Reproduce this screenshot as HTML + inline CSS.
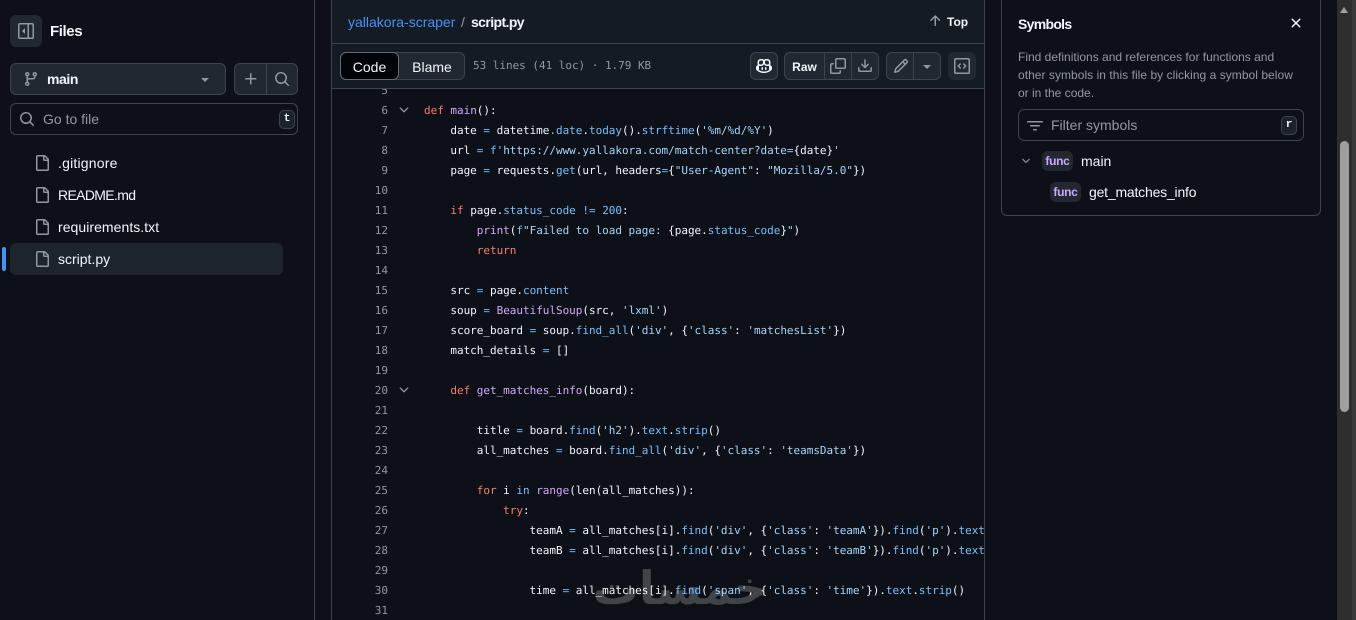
<!DOCTYPE html>
<html><head><meta charset="utf-8">
<style>
*{box-sizing:border-box}
html,body{margin:0;padding:0;width:1356px;height:620px;overflow:hidden;background:#0d1117}
body{position:relative;font-family:"Liberation Sans",sans-serif;font-size:14px;color:#f0f6fc}
.a{position:absolute;white-space:nowrap}
.t{position:absolute;white-space:nowrap;line-height:20px;height:20px}
.box{position:absolute;border:1px solid #3d444d;border-radius:6px}
.btn{background:#212830}
svg{position:absolute;fill:currentColor;display:block}
.g{color:#9198a1}
.kbd{position:absolute;width:16px;height:19px;background:#1c2229;border:1px solid #3d444d;border-radius:5px;font:bold 11px/17px "Liberation Mono",monospace;text-align:center;color:#f0f6fc}
.div{position:absolute;width:1px;background:#3d444d}
pre{position:absolute;margin:0;font:11px/20px "DejaVu Sans Mono",monospace;text-rendering:geometricPrecision;letter-spacing:-.025px;color:#f0f6fc}
.n{left:340px;width:48px;text-align:right;color:#9198a1;top:81px}
.c{left:424px;top:81px;width:560px;overflow:hidden;height:539px}
.k{color:#ff7b72}.f{color:#d2a8ff}.b{color:#79c0ff}.s{color:#a5d6ff}
.badge{position:absolute;width:31px;height:20px;background:#212830;border-radius:6px;color:#c9a8ff;font:bold 12px/20px "Liberation Sans",sans-serif;letter-spacing:-.3px;text-align:center}
</style></head><body>

<!-- sidebar -->
<div class="a" style="left:314px;top:0;width:1px;height:620px;background:#3d444d"></div>
<div class="a btn" style="left:10px;top:15px;width:32px;height:32px;border-radius:6px"></div>
<svg class="g" style="left:18px;top:23px" width="16" height="16" viewBox="0 0 16 16"><path d="M4.177 7.823 6.573 5.427A.25.25 0 0 1 7 5.604v4.792a.25.25 0 0 1-.427.177L4.177 8.177a.25.25 0 0 1 0-.354Z"/><path d="M1.75 0h12.5C15.216 0 16 .784 16 1.75v12.5A1.75 1.75 0 0 1 14.25 16H1.75A1.75 1.75 0 0 1 0 14.25V1.75C0 .784.784 0 1.75 0ZM1.5 1.75v12.5c0 .138.112.25.25.25H9.5v-13H1.75a.25.25 0 0 0-.25.25ZM11 14.5h3.25a.25.25 0 0 0 .25-.25V1.75a.25.25 0 0 0-.25-.25H11Z"/></svg>
<div class="t" style="left:50px;top:22px;font-weight:bold;font-size:15px;letter-spacing:-.4px">Files</div>

<div class="box btn" style="left:10px;top:63px;width:216px;height:32px"></div>
<svg class="g" style="left:23px;top:71px" width="16" height="16" viewBox="0 0 16 16"><path d="M9.5 3.25a2.25 2.25 0 1 1 3 2.122V6A2.5 2.5 0 0 1 10 8.5H6a1 1 0 0 0-1 1v1.128a2.251 2.251 0 1 1-1.5 0V5.372a2.25 2.25 0 1 1 1.5 0v1.836A2.493 2.493 0 0 1 6 7h4a1 1 0 0 0 1-1v-.628A2.25 2.25 0 0 1 9.5 3.25Zm-6 0a.75.75 0 1 0 1.5 0 .75.75 0 0 0-1.5 0Zm8.25-.75a.75.75 0 1 0 0 1.5.75.75 0 0 0 0-1.5ZM4.25 12a.75.75 0 1 0 0 1.5.75.75 0 0 0 0-1.5Z"/></svg>
<div class="t" style="left:47px;top:69px;font-weight:bold;letter-spacing:-.4px">main</div>
<div class="a" style="left:201px;top:78px;border-left:4px solid transparent;border-right:4px solid transparent;border-top:4px solid #9198a1"></div>

<div class="box btn" style="left:234px;top:63px;width:64px;height:32px"></div>
<div class="div" style="left:266px;top:64px;height:30px"></div>
<svg class="g" style="left:243px;top:71px" width="16" height="16" viewBox="0 0 16 16"><path d="M7.75 2a.75.75 0 0 1 .75.75V7h4.25a.75.75 0 0 1 0 1.5H8.5v4.25a.75.75 0 0 1-1.5 0V8.5H2.75a.75.75 0 0 1 0-1.5H7V2.75A.75.75 0 0 1 7.75 2Z"/></svg>
<svg class="g" style="left:274px;top:71px" width="16" height="16" viewBox="0 0 16 16"><path d="M10.68 11.74a6 6 0 0 1-7.922-8.982 6 6 0 0 1 8.982 7.922l3.04 3.04a.749.749 0 0 1-.326 1.275.749.749 0 0 1-.734-.215ZM11.5 7a4.499 4.499 0 1 0-8.997 0A4.499 4.499 0 0 0 11.5 7Z"/></svg>

<div class="box" style="left:10px;top:103px;width:288px;height:32px"></div>
<svg class="g" style="left:19px;top:111px" width="16" height="16" viewBox="0 0 16 16"><path d="M10.68 11.74a6 6 0 0 1-7.922-8.982 6 6 0 0 1 8.982 7.922l3.04 3.04a.749.749 0 0 1-.326 1.275.749.749 0 0 1-.734-.215ZM11.5 7a4.499 4.499 0 1 0-8.997 0A4.499 4.499 0 0 0 11.5 7Z"/></svg>
<div class="t g" style="left:43px;top:109px">Go to file</div>
<div class="kbd" style="left:279px;top:110px">t</div>

<div class="a" style="left:10px;top:243px;width:273px;height:32px;background:#1e242c;border-radius:6px"></div>
<div class="a" style="left:2px;top:247px;width:4px;height:24px;background:#4493f8;border-radius:2px"></div>
<svg class="g" style="left:34px;top:155px" width="16" height="16" viewBox="0 0 16 16"><path d="M2 1.75C2 .784 2.784 0 3.75 0h6.586c.464 0 .909.184 1.237.513l2.914 2.914c.329.328.513.773.513 1.237v9.586A1.75 1.75 0 0 1 13.25 16h-9.5A1.75 1.75 0 0 1 2 14.25Zm1.75-.25a.25.25 0 0 0-.25.25v12.5c0 .138.112.25.25.25h9.5a.25.25 0 0 0 .25-.25V6h-2.75A1.75 1.75 0 0 1 9 4.25V1.5Zm6.75.062V4.25c0 .138.112.25.25.25h2.688l-.011-.013-2.914-2.914-.013-.011Z"/></svg>
<svg class="g" style="left:34px;top:187px" width="16" height="16" viewBox="0 0 16 16"><path d="M2 1.75C2 .784 2.784 0 3.75 0h6.586c.464 0 .909.184 1.237.513l2.914 2.914c.329.328.513.773.513 1.237v9.586A1.75 1.75 0 0 1 13.25 16h-9.5A1.75 1.75 0 0 1 2 14.25Zm1.75-.25a.25.25 0 0 0-.25.25v12.5c0 .138.112.25.25.25h9.5a.25.25 0 0 0 .25-.25V6h-2.75A1.75 1.75 0 0 1 9 4.25V1.5Zm6.75.062V4.25c0 .138.112.25.25.25h2.688l-.011-.013-2.914-2.914-.013-.011Z"/></svg>
<svg class="g" style="left:34px;top:219px" width="16" height="16" viewBox="0 0 16 16"><path d="M2 1.75C2 .784 2.784 0 3.75 0h6.586c.464 0 .909.184 1.237.513l2.914 2.914c.329.328.513.773.513 1.237v9.586A1.75 1.75 0 0 1 13.25 16h-9.5A1.75 1.75 0 0 1 2 14.25Zm1.75-.25a.25.25 0 0 0-.25.25v12.5c0 .138.112.25.25.25h9.5a.25.25 0 0 0 .25-.25V6h-2.75A1.75 1.75 0 0 1 9 4.25V1.5Zm6.75.062V4.25c0 .138.112.25.25.25h2.688l-.011-.013-2.914-2.914-.013-.011Z"/></svg>
<svg class="g" style="left:34px;top:251px" width="16" height="16" viewBox="0 0 16 16"><path d="M2 1.75C2 .784 2.784 0 3.75 0h6.586c.464 0 .909.184 1.237.513l2.914 2.914c.329.328.513.773.513 1.237v9.586A1.75 1.75 0 0 1 13.25 16h-9.5A1.75 1.75 0 0 1 2 14.25Zm1.75-.25a.25.25 0 0 0-.25.25v12.5c0 .138.112.25.25.25h9.5a.25.25 0 0 0 .25-.25V6h-2.75A1.75 1.75 0 0 1 9 4.25V1.5Zm6.75.062V4.25c0 .138.112.25.25.25h2.688l-.011-.013-2.914-2.914-.013-.011Z"/></svg>
<div class="t" style="left:58px;top:153px;letter-spacing:.2px">.gitignore</div>
<div class="t" style="left:58px;top:185px;letter-spacing:-.65px">README.md</div>
<div class="t" style="left:58px;top:217px;letter-spacing:.05px">requirements.txt</div>
<div class="t" style="left:58px;top:249px">script.py</div>

<!-- watermark -->
<div class="a" dir="rtl" style="left:606px;top:558px;width:161px;height:60px;text-align:center;font:bold 46px/60px 'DejaVu Sans',sans-serif;color:#404347">خمسات</div>

<!-- code -->
<pre class="n">5
6
7
8
9
10
11
12
13
14
15
16
17
18
19
20
21
22
23
24
25
26
27
28
29
30
31</pre>
<pre class="c">

<span class="k">def</span> <span class="f">main</span>():
    date <span class="b">=</span> datetime<span class="b">.date</span>.<span class="b">today</span>().<span class="b">strftime</span>(<span class="s">'%m/%d/%Y'</span>)
    url <span class="b">=</span> <span class="b">f</span><span class="s">'https://www.yallakora.com/match-center?date=</span>{date}<span class="s">'</span>
    page <span class="b">=</span> requests.<span class="b">get</span>(url, headers<span class="b">=</span>{<span class="s">"User-Agent"</span>: <span class="s">"Mozilla/5.0"</span>})

    <span class="k">if</span> page.<span class="b">status_code</span> <span class="b">!=</span> <span class="b">200</span>:
        <span class="f">print</span>(<span class="b">f</span><span class="s">"Failed to load page: </span>{page.<span class="b">status_code</span>}<span class="s">"</span>)
        <span class="k">return</span>

    src <span class="b">=</span> page.<span class="b">content</span>
    soup <span class="b">=</span> <span class="f">BeautifulSoup</span>(src, <span class="s">'lxml'</span>)
    score_board <span class="b">=</span> soup.<span class="b">find_all</span>(<span class="s">'div'</span>, {<span class="s">'class'</span>: <span class="s">'matchesList'</span>})
    match_details <span class="b">=</span> []

    <span class="k">def</span> <span class="f">get_matches_info</span>(board):

        title <span class="b">=</span> board.<span class="b">find</span>(<span class="s">'h2'</span>).<span class="b">text</span>.<span class="b">strip</span>()
        all_matches <span class="b">=</span> board.<span class="b">find_all</span>(<span class="s">'div'</span>, {<span class="s">'class'</span>: <span class="s">'teamsData'</span>})

        <span class="k">for</span> i <span class="b">in</span> <span class="f">range</span>(len(all_matches)):
            <span class="k">try</span>:
                teamA <span class="b">=</span> all_matches[i].<span class="b">find</span>(<span class="s">'div'</span>, {<span class="s">'class'</span>: <span class="s">'teamA'</span>}).<span class="b">find</span>(<span class="s">'p'</span>).<span class="b">text</span>
                teamB <span class="b">=</span> all_matches[i].<span class="b">find</span>(<span class="s">'div'</span>, {<span class="s">'class'</span>: <span class="s">'teamB'</span>}).<span class="b">find</span>(<span class="s">'p'</span>).<span class="b">text</span>

                time <span class="b">=</span> all_matches[i].<span class="b">find</span>(<span class="s">'span'</span>, {<span class="s">'class'</span>: <span class="s">'time'</span>}).<span class="b">text</span>.<span class="b">strip</span>()
</pre>
<svg class="g" style="left:397px;top:103px" width="14" height="14" viewBox="0 0 16 16"><path d="M12.78 5.22a.749.749 0 0 1 0 1.06l-4.25 4.25a.749.749 0 0 1-1.06 0L3.22 6.28a.749.749 0 1 1 1.06-1.06L8 8.939l3.72-3.719a.749.749 0 0 1 1.06 0Z"/></svg>
<svg class="g" style="left:397px;top:383px" width="14" height="14" viewBox="0 0 16 16"><path d="M12.78 5.22a.749.749 0 0 1 0 1.06l-4.25 4.25a.749.749 0 0 1-1.06 0L3.22 6.28a.749.749 0 1 1 1.06-1.06L8 8.939l3.72-3.719a.749.749 0 0 1 1.06 0Z"/></svg>

<!-- main header -->
<div class="a" style="left:332px;top:0;width:652px;height:88px;background:#151b23"></div>
<div class="a" style="left:331px;top:0;width:1px;height:620px;background:#3d444d"></div>
<div class="a" style="left:984px;top:0;width:1px;height:620px;background:#3d444d"></div>
<div class="a" style="left:332px;top:43px;width:652px;height:1px;background:#3d444d"></div>
<div class="a" style="left:332px;top:88px;width:652px;height:1px;background:#3d444d"></div>

<div class="t" style="left:348px;top:12px;color:#4493f8">yallakora-scraper</div>
<div class="t g" style="left:461px;top:12px">/</div>
<div class="t" style="left:471px;top:12px;font-weight:bold;letter-spacing:-.6px">script.py</div>
<svg class="g" style="left:927px;top:13px" width="16" height="16" viewBox="0 0 16 16"><path d="M3.47 7.78a.75.75 0 0 1 0-1.06l4.25-4.25a.75.75 0 0 1 1.06 0l4.25 4.25a.751.751 0 0 1-.018 1.042.751.751 0 0 1-1.042.018L9 4.81v7.44a.75.75 0 0 1-1.5 0V4.81L4.53 7.78a.75.75 0 0 1-1.06 0Z"/></svg>
<div class="t" style="left:947px;top:12px;font-size:12px;font-weight:bold">Top</div>

<div class="box btn" style="left:340px;top:52px;width:125px;height:28px"></div>
<div class="box" style="left:340px;top:52px;width:59px;height:28px;background:#010409;border-color:#656c76"></div>
<div class="t" style="left:340px;top:57px;width:59px;text-align:center">Code</div>
<div class="t" style="left:399px;top:57px;width:66px;text-align:center">Blame</div>
<pre style="left:473px;top:56px;color:#9198a1">53 lines (41 loc) · 1.79 KB</pre>

<div class="box btn" style="left:750px;top:52px;width:28px;height:28px"></div>
<svg style="left:756px;top:58px;color:#f0f6fc" width="16" height="16" viewBox="0 0 16 16"><path d="M7.998 15.035c-4.562 0-7.873-2.914-7.998-3.749V9.338c.085-.628.677-1.686 1.588-2.065.013-.07.024-.143.036-.218.029-.183.06-.384.126-.612-.201-.508-.254-1.084-.254-1.656 0-.87.128-1.769.693-2.484.579-.733 1.494-1.124 2.724-1.261 1.206-.134 2.262.034 2.944.765.05.053.096.108.139.165.044-.057.094-.112.143-.165.682-.731 1.738-.899 2.944-.765 1.23.137 2.145.528 2.724 1.261.566.715.693 1.614.693 2.484 0 .572-.053 1.148-.254 1.656.066.228.098.429.126.612.012.076.024.148.037.218.924.385 1.522 1.471 1.591 2.095v1.872c0 .766-3.351 3.795-8.002 3.795Zm0-1.485c2.28 0 4.584-1.11 5.002-1.433V7.862l-.023-.116c-.49.21-1.075.291-1.727.291-1.146 0-2.059-.327-2.71-.991A3.222 3.222 0 0 1 8 6.303a3.24 3.24 0 0 1-.544.743c-.65.664-1.563.991-2.71.991-.652 0-1.236-.081-1.727-.291l-.023.116v4.255c.419.323 2.722 1.433 5.002 1.433ZM6.762 2.83c-.193-.206-.637-.413-1.682-.297-1.019.113-1.479.404-1.713.7-.247.312-.369.789-.369 1.554 0 .793.129 1.171.308 1.371.162.181.519.379 1.442.379.853 0 1.339-.235 1.638-.54.315-.322.527-.827.617-1.553.117-.935-.037-1.395-.241-1.614Zm4.155-.297c-1.044-.116-1.488.091-1.681.297-.204.219-.359.679-.242 1.614.091.726.303 1.231.618 1.553.299.305.784.54 1.638.54.922 0 1.28-.198 1.442-.379.179-.2.308-.578.308-1.371 0-.765-.123-1.242-.37-1.554-.233-.296-.693-.587-1.713-.7Z"/><path d="M6.25 9.037a.75.75 0 0 1 .75.75v1.501a.75.75 0 0 1-1.5 0V9.787a.75.75 0 0 1 .75-.75Zm4.25.75v1.501a.75.75 0 0 1-1.5 0V9.787a.75.75 0 0 1 1.5 0Z"/></svg>

<div class="box btn" style="left:784px;top:52px;width:95px;height:28px"></div>
<div class="div" style="left:824px;top:53px;height:26px"></div>
<div class="div" style="left:851px;top:53px;height:26px"></div>
<div class="t" style="left:785px;top:57px;width:39px;text-align:center;font-size:12px;font-weight:bold">Raw</div>
<svg class="g" style="left:830px;top:58px" width="16" height="16" viewBox="0 0 16 16"><path d="M0 6.75C0 5.784.784 5 1.75 5h1.5a.75.75 0 0 1 0 1.5h-1.5a.25.25 0 0 0-.25.25v7.5c0 .138.112.25.25.25h7.5a.25.25 0 0 0 .25-.25v-1.5a.75.75 0 0 1 1.5 0v1.5A1.75 1.75 0 0 1 9.25 16h-7.5A1.75 1.75 0 0 1 0 14.25Z"/><path d="M5 1.75C5 .784 5.784 0 6.75 0h7.5C15.216 0 16 .784 16 1.75v7.5A1.75 1.75 0 0 1 14.25 11h-7.5A1.75 1.75 0 0 1 5 9.25Zm1.75-.25a.25.25 0 0 0-.25.25v7.5c0 .138.112.25.25.25h7.5a.25.25 0 0 0 .25-.25v-7.5a.25.25 0 0 0-.25-.25Z"/></svg>
<svg class="g" style="left:857px;top:58px" width="16" height="16" viewBox="0 0 16 16"><path d="M2.75 14A1.75 1.75 0 0 1 1 12.25v-2.5a.75.75 0 0 1 1.5 0v2.5c0 .138.112.25.25.25h10.5a.25.25 0 0 0 .25-.25v-2.5a.75.75 0 0 1 1.5 0v2.5A1.75 1.75 0 0 1 13.25 14Z"/><path d="M7.25 7.689V2a.75.75 0 0 1 1.5 0v5.689l1.97-1.969a.749.749 0 1 1 1.06 1.06l-3.25 3.25a.749.749 0 0 1-1.06 0L4.22 6.78a.749.749 0 1 1 1.06-1.06l1.97 1.969Z"/></svg>

<div class="box btn" style="left:886px;top:52px;width:55px;height:28px"></div>
<div class="div" style="left:913px;top:53px;height:26px"></div>
<svg class="g" style="left:893px;top:58px" width="16" height="16" viewBox="0 0 16 16"><path d="M11.013 1.427a1.75 1.75 0 0 1 2.474 0l1.086 1.086a1.75 1.75 0 0 1 0 2.474l-8.61 8.61c-.21.21-.47.364-.756.445l-3.251.93a.75.75 0 0 1-.927-.928l.929-3.25c.081-.286.235-.547.445-.758l8.61-8.61Zm.176 4.823L9.75 4.81l-6.286 6.287a.253.253 0 0 0-.064.108l-.558 1.953 1.953-.558a.253.253 0 0 0 .108-.064Zm1.238-3.763a.25.25 0 0 0-.354 0L10.811 3.75l1.439 1.44 1.263-1.263a.25.25 0 0 0 0-.354Z"/></svg>
<div class="a" style="left:923px;top:65px;border-left:4px solid transparent;border-right:4px solid transparent;border-top:4px solid #9198a1"></div>

<div class="a btn" style="left:948px;top:52px;width:28px;height:28px;border-radius:6px"></div>
<svg class="g" style="left:954px;top:58px" width="16" height="16" viewBox="0 0 16 16"><path d="M0 1.75C0 .784.784 0 1.75 0h12.5C15.216 0 16 .784 16 1.75v12.5A1.75 1.75 0 0 1 14.25 16H1.75A1.75 1.75 0 0 1 0 14.25Zm1.75-.25a.25.25 0 0 0-.25.25v12.5c0 .138.112.25.25.25h12.5a.25.25 0 0 0 .25-.25V1.75a.25.25 0 0 0-.25-.25Zm7.47 3.97a.75.75 0 0 1 1.06 0l2 2a.75.75 0 0 1 0 1.06l-2 2a.749.749 0 0 1-1.275-.326.749.749 0 0 1 .215-.734L10.69 8 9.22 6.53a.75.75 0 0 1 0-1.06ZM6.78 6.53 5.31 8l1.47 1.47a.749.749 0 0 1-.326 1.275.749.749 0 0 1-.734-.215l-2-2a.75.75 0 0 1 0-1.06l2-2a.751.751 0 0 1 1.042.018.751.751 0 0 1 .018 1.042Z"/></svg>

<!-- symbols -->
<div class="box" style="left:1001px;top:-10px;width:320px;height:226px"></div>
<div class="t" style="left:1018px;top:14px;font-weight:bold;letter-spacing:-.7px">Symbols</div>
<svg style="left:1288px;top:15px;color:#f0f6fc" width="16" height="16" viewBox="0 0 16 16"><path d="M3.72 3.72a.75.75 0 0 1 1.06 0L8 6.94l3.22-3.22a.749.749 0 0 1 1.275.326.749.749 0 0 1-.215.734L9.06 8l3.22 3.22a.749.749 0 0 1-.326 1.275.749.749 0 0 1-.734-.215L8 9.06l-3.22 3.22a.751.751 0 0 1-1.042-.018.751.751 0 0 1-.018-1.042L6.94 8 3.72 4.78a.75.75 0 0 1 0-1.06Z"/></svg>
<div class="t g" style="left:1018px;top:47px;font-size:12px">Find definitions and references for functions and</div>
<div class="t g" style="left:1018px;top:65px;font-size:12px;letter-spacing:.04px">other symbols in this file by clicking a symbol below</div>
<div class="t g" style="left:1018px;top:83px;font-size:12px">or in the code.</div>
<div class="box" style="left:1018px;top:109px;width:286px;height:32px"></div>
<svg class="g" style="left:1027px;top:118px" width="16" height="16" viewBox="0 0 16 16"><path d="M.75 3h14.5a.75.75 0 0 1 0 1.5H.75a.75.75 0 0 1 0-1.5ZM3 7.75A.75.75 0 0 1 3.75 7h8.5a.75.75 0 0 1 0 1.5h-8.5A.75.75 0 0 1 3 7.75Zm3 4a.75.75 0 0 1 .75-.75h2.5a.75.75 0 0 1 0 1.5h-2.5a.75.75 0 0 1-.75-.75Z"/></svg>
<div class="t g" style="left:1051px;top:115px">Filter symbols</div>
<div class="kbd" style="left:1281px;top:116px">r</div>
<svg class="g" style="left:1020px;top:155px" width="12" height="12" viewBox="0 0 16 16"><path d="M12.78 5.22a.749.749 0 0 1 0 1.06l-4.25 4.25a.749.749 0 0 1-1.06 0L3.22 6.28a.749.749 0 1 1 1.06-1.06L8 8.939l3.72-3.719a.749.749 0 0 1 1.06 0Z"/></svg>
<div class="badge" style="left:1042px;top:151px">func</div>
<div class="t" style="left:1081px;top:151px">main</div>
<div class="badge" style="left:1050px;top:182px">func</div>
<div class="t" style="left:1089px;top:182px;letter-spacing:-.2px">get_matches_info</div>

<!-- scrollbar -->
<div class="a" style="left:1337px;top:0;width:15px;height:620px;background:#2e2e2e"></div>
<div class="a" style="left:1352px;top:0;width:4px;height:620px;background:#3a3a3a"></div>
<div class="a" style="left:1340px;top:141px;width:9px;height:271px;background:#9f9f9f;border-radius:5px"></div>
<div class="a" style="left:1340px;top:7px;border-left:4.5px solid transparent;border-right:4.5px solid transparent;border-bottom:6px solid #9f9f9f"></div>
</body></html>
